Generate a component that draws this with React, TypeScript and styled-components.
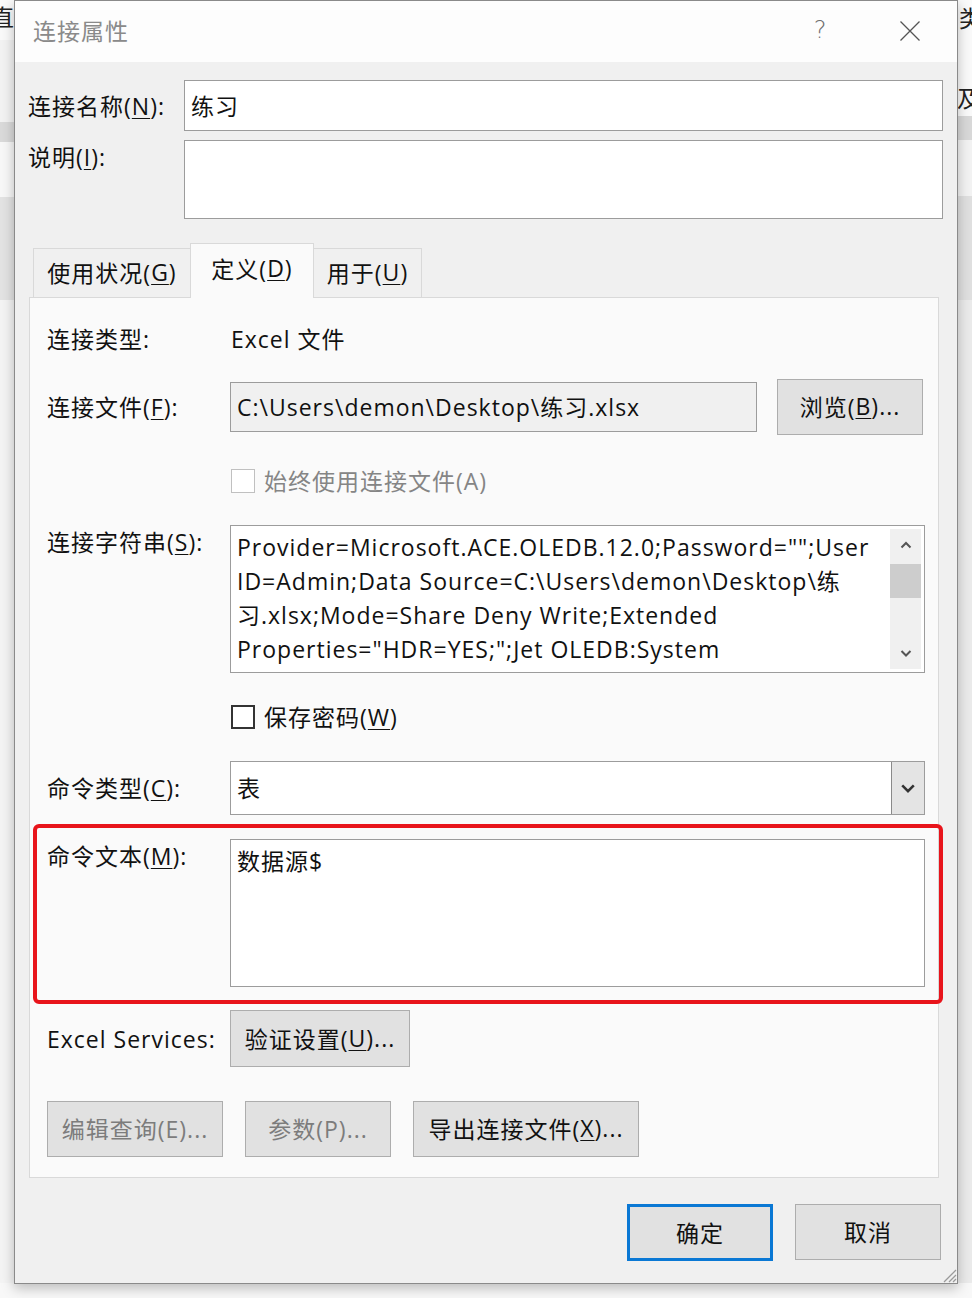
import React from "react";
import styled, { createGlobalStyle } from "styled-components";

const GlobalStyle = createGlobalStyle`
  html, body {
    margin: 0;
    padding: 0;
  }
  body {
    font-family: "Open Sans", "Noto Sans CJK SC", sans-serif;
    color: #111;
  }
`;

const connLines = [
  'Provider=Microsoft.ACE.OLEDB.12.0;Password="";User',
  "ID=Admin;Data Source=C:\\Users\\demon\\Desktop\\练",
  "习.xlsx;Mode=Share Deny Write;Extended",
  'Properties="HDR=YES;";Jet OLEDB:System',
];

function Chevron({ dir, size = 14, color = "#555" }: { dir: "up" | "down"; size?: number; color?: string }) {
  const d = dir === "up" ? "M2.5 9.5 L7 5 L11.5 9.5" : "M2.5 5 L7 9.5 L11.5 5";
  return (
    <svg width={size} height={size} viewBox="0 0 14 14">
      <path d={d} fill="none" stroke={color} strokeWidth="2" />
    </svg>
  );
}

function App() {
  return (
    <>
      <GlobalStyle />
      <Desktop>
        <SideStrip $side="left">
          <StripGlyph $offset={-9} $top={3}>直</StripGlyph>
        </SideStrip>
        <Dialog>
          <TitleBar>
            <Title>连接属性</Title>
            <HelpButton>?</HelpButton>
            <CloseButton>
              <svg width="22" height="22" viewBox="0 0 22 22">
                <path d="M1.5 1.5 L20.5 20.5 M20.5 1.5 L1.5 20.5" stroke="#555" strokeWidth="1.3" />
              </svg>
            </CloseButton>
          </TitleBar>

          <Body>
            <TopRow>
              <Label>
                连接名称(<Key>N</Key>):
              </Label>
              <TextBox $height={51}>练习</TextBox>
            </TopRow>
            <TopRow $gap={9} $top>
              <Label>
                说明(<Key>I</Key>):
              </Label>
              <TextBox $height={79} />
            </TopRow>

            <TabStrip>
              <Tab $width={158}>
                使用状况(<Key>G</Key>)
              </Tab>
              <Tab $width={124} $active>
                定义(<Key>D</Key>)
              </Tab>
              <Tab $width={109}>
                用于(<Key>U</Key>)
              </Tab>
            </TabStrip>

            <Panel>
              <PanelRow $gap={24} $height={34}>
                <Label>连接类型:</Label>
                <PlainValue>Excel 文件</PlainValue>
              </PanelRow>

              <PanelRow $gap={23} $height={56}>
                <Label>
                  连接文件(<Key>F</Key>):
                </Label>
                <FileLine>
                  <TextBox $height={50} $readOnly>
                    C:\Users\demon\Desktop\练习.xlsx
                  </TextBox>
                  <Button $width={146} $height={56}>
                    浏览(<Key>B</Key>)...
                  </Button>
                </FileLine>
              </PanelRow>

              <PanelRow $gap={34} $height={24}>
                <span />
                <CheckLine $disabled>
                  <CheckBox $disabled />
                  <span>始终使用连接文件(A)</span>
                </CheckLine>
              </PanelRow>

              <PanelRow $gap={32} $top>
                <Label>
                  连接字符串(<Key>S</Key>):
                </Label>
                <MultiLine $height={148}>
                  <MultiText>
                    {connLines.map((l) => (
                      <div key={l}>{l}</div>
                    ))}
                  </MultiText>
                  <ScrollBar>
                    <ScrollArrow>
                      <Chevron dir="up" />
                    </ScrollArrow>
                    <ScrollTrack>
                      <ScrollThumb />
                    </ScrollTrack>
                    <ScrollArrow>
                      <Chevron dir="down" />
                    </ScrollArrow>
                  </ScrollBar>
                </MultiLine>
              </PanelRow>

              <PanelRow $gap={32} $height={24}>
                <span />
                <CheckLine>
                  <CheckBox />
                  <span>
                    保存密码(<Key>W</Key>)
                  </span>
                </CheckLine>
              </PanelRow>

              <PanelRow $gap={32} $height={54}>
                <Label>
                  命令类型(<Key>C</Key>):
                </Label>
                <Combo>
                  <ComboText>表</ComboText>
                  <ComboButton>
                    <Chevron dir="down" size={18} color="#333" />
                  </ComboButton>
                </Combo>
              </PanelRow>

              <Highlight>
                <Label>
                  命令文本(<Key>M</Key>):
                </Label>
                <MultiLine $height={148}>
                  <MultiText>数据源$</MultiText>
                </MultiLine>
              </Highlight>

              <PanelRow $gap={6} $height={57}>
                <Label>Excel Services:</Label>
                <Button $width={180} $height={57}>
                  验证设置(<Key>U</Key>)...
                </Button>
              </PanelRow>

              <ActionRow>
                <Button $width={176} $height={56} $disabled>
                  编辑查询(E)...
                </Button>
                <Button $width={146} $height={56} $disabled>
                  参数(P)...
                </Button>
                <Button $width={226} $height={56}>
                  导出连接文件(<Key>X</Key>)...
                </Button>
              </ActionRow>
            </Panel>

            <Footer>
              <Button $width={146} $height={57} $primary>
                确定
              </Button>
              <Button $width={146} $height={56}>
                取消
              </Button>
            </Footer>
          </Body>

          <Grip>
            <svg width="18" height="18" viewBox="0 0 18 18">
              <path d="M17 5 L5 17 M17 10 L10 17 M17 14 L14 17" stroke="#9a9a9a" strokeWidth="1.3" />
            </svg>
          </Grip>
        </Dialog>
        <SideStrip $side="right">
          <StripGlyph $offset={1} $top={4}>类</StripGlyph>
          <StripGlyph $offset={-1} $top={52}>及</StripGlyph>
        </SideStrip>
      </Desktop>
    </>
  );
}

export default App;

const Desktop = styled.div`
  width: 972px;
  height: 1298px;
  display: flex;
  align-items: flex-start;
  background: #f8f8f8;
  overflow: hidden;
`;

const SideStrip = styled.div<{ $side: "left" | "right" }>`
  width: 14px;
  height: 1298px;
  flex: none;
  overflow: hidden;
  font-size: 23px;
  line-height: 28px;
  color: #222;
  background: ${({ $side }) =>
    $side === "left"
      ? `linear-gradient(to bottom, #fafafa 0 40px, #f3f3f3 40px 122px, #dadada 122px 142px,
         #f8f8f8 142px 197px, #e3e3e3 197px 300px, #f4f4f4 300px 1283px, #f8f8f8 1283px)`
      : `linear-gradient(to bottom, #fafafa 0 116px, #d9d9d9 116px 140px,
         #f3f3f3 140px 196px, #e0e0e0 196px 300px, #ebebeb 300px 1283px, #f8f8f8 1283px)`};
`;

const StripGlyph = styled.div<{ $offset: number; $top: number }>`
  margin-left: ${({ $offset }) => $offset}px;
  margin-top: ${({ $top }) => $top}px;
  white-space: nowrap;
`;

const Dialog = styled.div`
  position: relative;
  width: 944px;
  height: 1284px;
  flex: none;
  box-sizing: border-box;
  border: 1px solid #8a8a8a;
  background: #f0f0f0;
  display: flex;
  flex-direction: column;
  box-shadow: 0 4px 12px rgba(0, 0, 0, 0.25);
`;

const TitleBar = styled.div`
  height: 61px;
  flex: none;
  display: flex;
  align-items: center;
  background: #fdfdfd;
  padding-right: 2px;
`;

const Title = styled.div`
  flex: 1;
  padding: 0 0 3px 18px;
  font-size: 23px;
  letter-spacing: 1px;
  color: #8a8a8a;
`;

const HelpButton = styled.div`
  width: 90px;
  text-align: center;
  font-family: "DejaVu Sans", sans-serif;
  font-size: 24px;
  font-weight: 300;
  color: #707070;
  padding-bottom: 4px;
`;

const CloseButton = styled.div`
  width: 90px;
  display: flex;
  justify-content: center;
  padding-bottom: 2px;
`;

const Body = styled.div`
  flex: 1;
  padding: 18px 14px 0 13px;
  font-size: 23px;
  letter-spacing: 1px;
`;

const Key = styled.span`
  text-decoration: underline;
  text-decoration-thickness: 1px;
  text-underline-offset: 3px;
`;

const Label = styled.div`
  line-height: 34px;
  white-space: nowrap;
  color: #111;
`;

const TopRow = styled.div<{ $gap?: number; $top?: boolean }>`
  display: grid;
  grid-template-columns: 156px 1fr;
  align-items: ${({ $top }) => ($top ? "start" : "center")};
  margin-top: ${({ $gap }) => $gap ?? 0}px;
`;

const TextBox = styled.div<{ $height: number; $readOnly?: boolean }>`
  flex: 1;
  height: ${({ $height }) => $height}px;
  box-sizing: border-box;
  border: 1px solid #9c9c9c;
  background: ${({ $readOnly }) => ($readOnly ? "#f0f0f0" : "#fff")};
  padding: 0 6px 2px;
  display: flex;
  align-items: center;
  white-space: nowrap;
  overflow: hidden;
`;

const TabStrip = styled.div`
  margin-top: 24px;
  height: 55px;
  padding-left: 5px;
  display: flex;
  align-items: flex-end;
  position: relative;
  z-index: 1;
  margin-bottom: -1px;
`;

const Tab = styled.div<{ $width: number; $active?: boolean }>`
  width: ${({ $width }) => $width}px;
  height: ${({ $active }) => ($active ? 55 : 50)}px;
  box-sizing: border-box;
  border: 1px solid #d9d9d9;
  border-bottom: ${({ $active }) => ($active ? "none" : "1px solid #d9d9d9")};
  margin-left: ${({ $active }) => ($active ? "-1px" : "0")};
  margin-right: ${({ $active }) => ($active ? "-1px" : "0")};
  position: relative;
  z-index: ${({ $active }) => ($active ? 2 : 1)};
  background: ${({ $active }) => ($active ? "#fafafa" : "#f0f0f0")};
  display: flex;
  align-items: center;
  justify-content: center;
  padding: ${({ $active }) => ($active ? "0 0 6px" : "0 0 3px")};
  white-space: nowrap;
`;

const Panel = styled.div`
  margin: 0 4px 0 1px;
  height: 881px;
  box-sizing: border-box;
  border: 1px solid #d9d9d9;
  background: #fafafa;
  padding: 0 13px 0 17px;
`;

const PanelRow = styled.div<{ $gap: number; $height?: number; $top?: boolean }>`
  display: grid;
  grid-template-columns: 183px 1fr;
  align-items: ${({ $top }) => ($top ? "start" : "center")};
  margin-top: ${({ $gap }) => $gap}px;
  height: ${({ $height }) => ($height ? `${$height}px` : "auto")};
`;

const PlainValue = styled.div`
  padding-left: 1px;
  line-height: 34px;
`;

const FileLine = styled.div`
  display: flex;
  align-items: center;
  gap: 20px;
  padding-right: 2px;
`;

const Button = styled.div<{ $width: number; $height: number; $disabled?: boolean; $primary?: boolean }>`
  width: ${({ $width }) => $width}px;
  height: ${({ $height }) => $height}px;
  flex: none;
  box-sizing: border-box;
  border: ${({ $primary }) => ($primary ? "3px solid #0a78d4" : "1px solid #adadad")};
  background: #e1e1e1;
  color: ${({ $disabled }) => ($disabled ? "#7c7c7c" : "#111")};
  display: flex;
  align-items: center;
  justify-content: center;
  padding-bottom: 2px;
  white-space: nowrap;
`;

const CheckLine = styled.div<{ $disabled?: boolean }>`
  display: flex;
  align-items: center;
  gap: 9px;
  height: 24px;
  line-height: 24px;
  padding-left: 1px;
  white-space: nowrap;
  color: ${({ $disabled }) => ($disabled ? "#858585" : "#111")};
`;

const CheckBox = styled.div<{ $disabled?: boolean }>`
  width: 24px;
  height: 24px;
  flex: none;
  box-sizing: border-box;
  border: ${({ $disabled }) => ($disabled ? "1px solid #c0c0c0" : "2px solid #333")};
  background: #fff;
`;

const MultiLine = styled.div<{ $height: number }>`
  height: ${({ $height }) => $height}px;
  box-sizing: border-box;
  border: 1px solid #9c9c9c;
  background: #fff;
  display: flex;
  overflow: hidden;
`;

const MultiText = styled.div`
  flex: 1;
  padding: 4px 6px 0;
  line-height: 34px;
  white-space: nowrap;
  overflow: hidden;
`;

const ScrollBar = styled.div`
  width: 31px;
  margin: 3px 3px 3px 0;
  background: #f0f0f0;
  display: flex;
  flex-direction: column;
`;

const ScrollArrow = styled.div`
  height: 32px;
  display: flex;
  align-items: center;
  justify-content: center;
`;

const ScrollTrack = styled.div`
  flex: 1;
  padding-top: 3px;
`;

const ScrollThumb = styled.div`
  height: 34px;
  background: #cdcdcd;
`;

const Combo = styled.div`
  height: 54px;
  box-sizing: border-box;
  border: 1px solid #9c9c9c;
  background: #fff;
  display: flex;
`;

const ComboText = styled.div`
  flex: 1;
  padding: 0 0 2px 6px;
  display: flex;
  align-items: center;
`;

const ComboButton = styled.div`
  width: 33px;
  box-sizing: border-box;
  border-left: 1px solid #8a8a8a;
  background: #e4e4e4;
  display: flex;
  align-items: center;
  justify-content: center;
`;

const Highlight = styled.div`
  margin: 9px -18px 0 -14px;
  height: 180px;
  box-sizing: border-box;
  border: 4px solid #e8141b;
  border-radius: 6px;
  padding: 11px 14px 0 10px;
  display: grid;
  grid-template-columns: 183px 1fr;
  align-items: start;
`;

const ActionRow = styled.div`
  margin-top: 34px;
  display: flex;
  gap: 22px;
`;

const Footer = styled.div`
  margin-top: 26px;
  display: flex;
  justify-content: flex-end;
  align-items: flex-start;
  gap: 22px;
  padding-right: 2px;
`;

const Grip = styled.div`
  position: absolute;
  right: 0;
  bottom: 0;
  width: 18px;
  height: 18px;
`;
